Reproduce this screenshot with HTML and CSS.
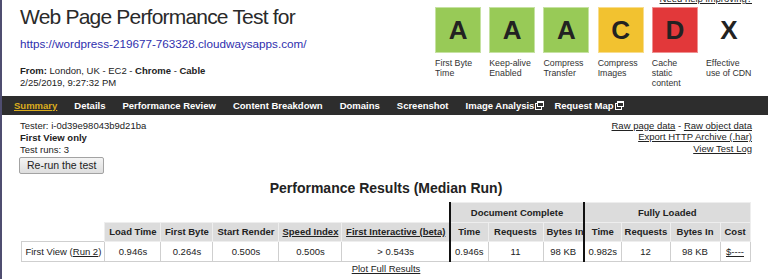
FILE: index.html
```
<!DOCTYPE html>
<html lang="en">
<head>
  <meta charset="UTF-8" />
  <title>WebPagetest Test Result</title>
  <meta name="viewport" content="width=device-width, initial-scale=1.0" />
  <link rel="stylesheet" href="styles.css">
</head>
<body>
  <header class="page-head">
    <div class="test-info">
      <h1>Web Page Performance Test for</h1>
      <a class="test-url" href="#">https://wordpress-219677-763328.cloudwaysapps.com/</a>
      <p class="test-meta"><b>From:</b> London, UK - EC2 - <b>Chrome</b> - <b>Cable</b><br>2/25/2019, 9:27:32 PM</p>
    </div>
    <div class="grades-wrap">
      <a class="help-link" href="#">Need help improving?</a>
      <ul class="grades">
        <li><div class="grade grade-a">A</div><span>First Byte Time</span></li>
        <li><div class="grade grade-a">A</div><span>Keep-alive Enabled</span></li>
        <li><div class="grade grade-a">A</div><span>Compress Transfer</span></li>
        <li><div class="grade grade-c">C</div><span>Compress Images</span></li>
        <li><div class="grade grade-d">D</div><span>Cache static content</span></li>
        <li><div class="grade grade-x">X</div><span>Effective use of CDN</span></li>
      </ul>
    </div>
  </header>

  <!-- result tabs -->
  <nav class="tabs">
    <a class="current" href="#">Summary</a>
    <a href="#">Details</a>
    <a href="#">Performance Review</a>
    <a href="#">Content Breakdown</a>
    <a href="#">Domains</a>
    <a href="#">Screenshot</a>
    <a class="ext" href="#">Image Analysis<svg class="ext-icon" width="9" height="9" viewBox="0 0 9 9"><rect x="0.5" y="2.5" width="6" height="6" fill="none" stroke="#fff"/><rect x="2.5" y="0.5" width="6" height="5" fill="#2d2d2d" stroke="#fff"/><rect x="2.5" y="0.5" width="6" height="1.5" fill="#fff"/></svg></a>
    <a class="ext" href="#">Request Map<svg class="ext-icon" width="9" height="9" viewBox="0 0 9 9"><rect x="0.5" y="2.5" width="6" height="6" fill="none" stroke="#fff"/><rect x="2.5" y="0.5" width="6" height="5" fill="#2d2d2d" stroke="#fff"/><rect x="2.5" y="0.5" width="6" height="1.5" fill="#fff"/></svg></a>
  </nav>

  <main class="result">
    <div class="result-top">
      <div class="run-info">
        <p>Tester: i-0d39e98043b9d21ba</p>
        <p><b>First View only</b></p>
        <p>Test runs: 3</p>
        <button class="rerun">Re-run the test</button>
      </div>
      <div class="raw-links">
        <a href="#">Raw page data</a> - <a href="#">Raw object data</a><br>
        <a href="#">Export HTTP Archive (.har)</a><br>
        <a href="#">View Test Log</a>
      </div>
    </div>

    <h2>Performance Results (Median Run)</h2>
    <table class="results">
      <colgroup>
        <col style="width:83px"><col style="width:56px"><col style="width:52px"><col style="width:66px">
        <col style="width:63px"><col style="width:108px"><col style="width:38px"><col style="width:55px">
        <col style="width:41px"><col style="width:37px"><col style="width:49px"><col style="width:50px">
        <col style="width:30px">
      </colgroup>
      <tr>
        <th class="blank" colspan="6"></th>
        <th class="sep" colspan="3">Document Complete</th>
        <th class="sep" colspan="4">Fully Loaded</th>
      </tr>
      <tr>
        <th class="blank"></th>
        <th>Load Time</th>
        <th>First Byte</th>
        <th>Start Render</th>
        <th><a href="#">Speed Index</a></th>
        <th><a href="#">First Interactive (beta)</a></th>
        <th class="sep">Time</th>
        <th>Requests</th>
        <th>Bytes In</th>
        <th class="sep">Time</th>
        <th>Requests</th>
        <th>Bytes In</th>
        <th>Cost</th>
      </tr>
      <tr>
        <td class="row-head">First View (<a href="#">Run 2</a>)</td>
        <td>0.946s</td>
        <td>0.264s</td>
        <td>0.500s</td>
        <td>0.500s</td>
        <td>&gt; 0.543s</td>
        <td class="sep">0.946s</td>
        <td>11</td>
        <td>98 KB</td>
        <td class="sep">0.982s</td>
        <td>12</td>
        <td>98 KB</td>
        <td><a href="#">$----</a></td>
      </tr>
    </table>
    <p class="plot"><a href="#">Plot Full Results</a></p>
  </main>
</body>
</html>
```

FILE: styles.css
```
* { box-sizing: border-box; }
body { margin: 0; min-height: 100vh; border-left: 2px solid #4f4d70; font-family: "Liberation Sans", Arial, sans-serif; font-size: 9.5px; color: #222; }
a { color: #222; }
p { margin: 0; }

.page-head { display: flex; justify-content: space-between; height: 96px; padding: 0 16px 0 18px; }
.test-info h1 { margin: 5px 0 0; font-size: 21px; font-weight: normal; line-height: 24px; letter-spacing: -0.8px; color: #2a2a2a; }
.test-url { display: block; margin-top: 8px; font-size: 11.7px; line-height: 14px; color: #2f2fae; text-decoration: none; }
.test-meta { margin-top: 14px; line-height: 11.5px; }

.grades-wrap { display: flex; flex-direction: column; align-items: flex-end; }
.help-link { margin-top: -7px; line-height: 11px; }
.grades { display: flex; gap: 8.2px; margin: 3px 0 0; padding: 0; list-style: none; }
.grades li { width: 46px; }
.grade { height: 46px; border: 1px solid rgba(255,255,255,.45); font-size: 26px; font-weight: bold; line-height: 44px; text-align: center; color: #222; }
.grade-a { background: #98ca57; }
.grade-c { background: #f2c230; }
.grade-d { background: #e2383a; }
.grade-x { border-color: transparent; }
.grades span { display: block; margin-top: 4.6px; font-size: 8.8px; line-height: 10px; color: #333; }

.tabs { display: flex; height: 19px; padding-left: 12px; background: #2d2d2d; line-height: 19px; font-weight: bold; }
.tabs a { margin-right: 17px; color: #fff; text-decoration: none; white-space: nowrap; }
.tabs a.current { color: #dcae1d; text-decoration: underline; }
.tabs a.ext { margin-right: 10px; }
.ext-icon { margin-left: 1px; vertical-align: -1px; }

.result { padding: 0 16px 0 18px; }
.result-top { display: flex; justify-content: space-between; padding-top: 4.7px; }
.run-info p { line-height: 12px; }
.rerun { display: block; margin: 1.3px 0 0 -1px; height: 17px; padding: 0 7px; border: 1px solid #a3a3a3; border-radius: 2px; background: linear-gradient(#f4f4f4, #dedede); font-family: inherit; font-size: 10.5px; line-height: 14px; color: #222; }
.raw-links { text-align: right; line-height: 11.5px; }

.result h2 { margin: 6.4px 0 6px; font-size: 14px; line-height: 16px; text-align: center; }
.results { width: 728px; margin: 0 auto; border-collapse: collapse; table-layout: fixed; }
.results th, .results td { height: 19.5px; padding: 0 3px; line-height: 12px; text-align: center; white-space: nowrap; }
.results th { border: 1px solid #eee; background: #dcdcdc; }
.results td { border: 1px solid #cfcfcf; font-weight: normal; }
.results th.blank { border: none; background: none; }
.results td.row-head { text-align: left; }
.results .sep { border-left: 2px solid #111; }
.plot { margin-top: 1px; line-height: 12px; text-align: center; }
```
